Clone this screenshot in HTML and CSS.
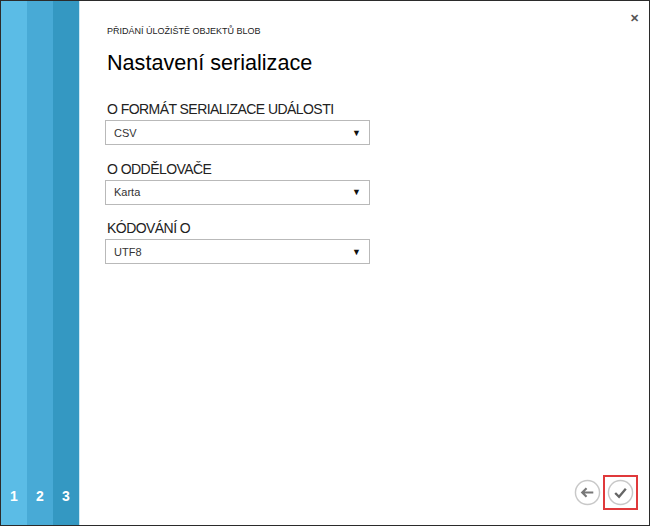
FILE: index.html
```html
<!DOCTYPE html>
<html lang="cs">
<head>
<meta charset="utf-8">
<link rel="stylesheet" href="styles.css">
</head>
<body>
<div class="dialog">
  <nav class="steps">
    <div class="step s1"><span>1</span></div>
    <div class="step s2"><span>2</span></div>
    <div class="step s3"><span>3</span></div>
  </nav>
  <main class="content">
    <div class="close">&#x2715;</div>
    <div class="subtitle">PŘIDÁNÍ ÚLOŽIŠTĚ OBJEKTŮ BLOB</div>
    <h1 class="title">Nastavení serializace</h1>
    <div class="field">
      <div class="label">O FORMÁT SERIALIZACE UDÁLOSTI</div>
      <div class="select"><span>CSV</span><span class="arrow">&#9660;</span></div>
    </div>
    <div class="field">
      <div class="label">O ODDĚLOVAČE</div>
      <div class="select"><span>Karta</span><span class="arrow">&#9660;</span></div>
    </div>
    <div class="field">
      <div class="label">KÓDOVÁNÍ O</div>
      <div class="select"><span>UTF8</span><span class="arrow">&#9660;</span></div>
    </div>
    <div class="spacer"></div>
    <div class="actions">
      <div class="btn back">
        <svg width="27" height="27" viewBox="0 0 28 28"><circle cx="14" cy="14" r="12.5" fill="none" stroke="#c8c8c8" stroke-width="1.5"/><path d="M20 14H9M13 9.5L8.5 14L13 18.5" fill="none" stroke="#777" stroke-width="2.2"/></svg>
      </div>
      <div class="btn ok">
        <svg width="27" height="27" viewBox="0 0 28 28"><circle cx="14" cy="14" r="12.5" fill="none" stroke="#c8c8c8" stroke-width="1.5"/><path d="M8.5 14.5L12.5 18.5L19.5 10" fill="none" stroke="#666" stroke-width="2.4"/></svg>
      </div>
    </div>
  </main>
</div>
</body>
</html>
```
FILE: styles.css
```css
* { box-sizing: border-box; }
html, body { margin: 0; padding: 0; }
body { width: 650px; height: 526px; font-family: "Liberation Sans", Arial, sans-serif; background: #fff; }
.dialog { display: flex; width: 650px; height: 526px; border: 1px solid #2b2b2b; }
.steps { display: flex; border-right: 1px solid #cde9f5; }
.step { width: 26px; display: flex; align-items: flex-end; justify-content: center; padding-bottom: 21px; color: #fff; font-weight: bold; font-size: 14px; }
.s1 { background: #5bbce6; }
.s2 { background: #48aad6; }
.s3 { background: #3498c2; }
.content { flex: 1; position: relative; display: flex; flex-direction: column; padding: 25px 0 0 27px; }
.close { position: absolute; top: 11px; right: 10px; font-size: 11px; font-weight: bold; color: #555; }
.subtitle { font-size: 9px; color: #222; }
.title { font-size: 21.6px; font-weight: normal; margin: 14px 0 25px; color: #000; }
.field { margin-bottom: 15.5px; }
.label { font-size: 14px; color: #222; margin-bottom: 3px; letter-spacing: -0.55px; }
.select { margin-left: -2px; width: 265px; height: 25px; border: 1px solid #b9b9b9; display: flex; align-items: center; justify-content: space-between; padding: 0 8px; font-size: 11px; color: #333; }
.arrow { font-size: 9px; color: #111; }
.spacer { flex: 1; }
.actions { display: flex; justify-content: flex-end; gap: 2px; padding: 0 11px 15px 0; align-items: center; }
.btn { display: flex; }
.btn.ok { border: 2px solid #e0393b; padding: 2px; }
.btn svg { display: block; }
```
